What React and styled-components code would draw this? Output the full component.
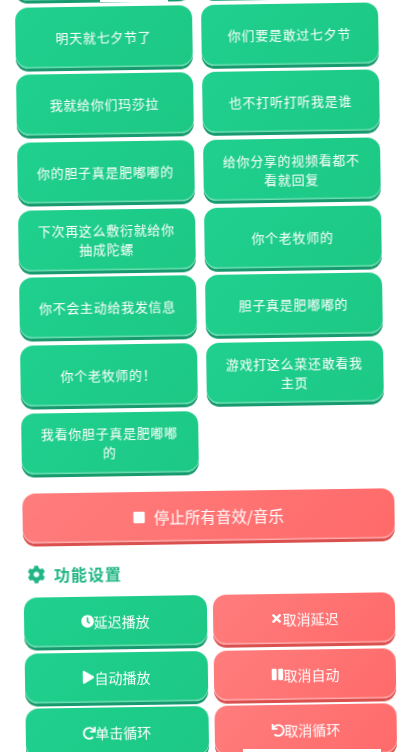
import React from "react";
import styled, { createGlobalStyle } from "styled-components";
import { FaCog, FaClock, FaPlay, FaTimes, FaPause, FaRedo, FaUndo, FaStop } from "react-icons/fa";

const sounds = [
  "", "",
  "明天就七夕节了", "你们要是敢过七夕节",
  "我就给你们玛莎拉", "也不打听打听我是谁",
  "你的胆子真是肥嘟嘟的", "给你分享的视频看都不看就回复",
  "下次再这么敷衍就给你抽成陀螺", "你个老牧师的",
  "你不会主动给我发信息", "胆子真是肥嘟嘟的",
  "你个老牧师的！", "游戏打这么菜还敢看我主页",
  "我看你胆子真是肥嘟嘟的",
];

const settings = [
  { label: "延迟播放", icon: <FaClock />, red: false },
  { label: "取消延迟", icon: <FaTimes />, red: true },
  { label: "自动播放", icon: <FaPlay />, red: false },
  { label: "取消自动", icon: <FaPause />, red: true },
  { label: "单击循环", icon: <FaRedo />, red: false },
  { label: "取消循环", icon: <FaUndo />, red: true },
];

const App = () => {
  return (
    <Viewport>
      <GlobalStyle />
      <Tilted>
        <SoundGrid>
          {sounds.map((s, i) => (
            <SoundButton key={i}>{s}</SoundButton>
          ))}
        </SoundGrid>
        <StopButton>
          <FaStop />
          <span>停止所有音效/音乐</span>
        </StopButton>
        <Heading>
          <FaCog />
          <span>功能设置</span>
        </Heading>
        <SettingGrid>
          {settings.map((s) => (
            <SettingButton key={s.label} $red={s.red}>
              {s.icon}
              <span>{s.label}</span>
            </SettingButton>
          ))}
        </SettingGrid>
      </Tilted>
      <TopPatch />
      <BottomPatch />
    </Viewport>
  );
};

export default App;

const GlobalStyle = createGlobalStyle`
  html, body {
    margin: 0;
    padding: 0;
    background: #fff;
    overflow: hidden;
  }
`;

const Viewport = styled.div`
  position: relative;
  width: 412px;
  height: 752px;
  overflow: hidden;
  background: #fff;
  font-family: "Noto Sans CJK SC", "Noto Sans", sans-serif;
`;

// the whole page is photographed slightly askew
const Tilted = styled.div`
  width: 412px;
  box-sizing: border-box;
  padding: 0 26px 0 13.5px;
  transform: rotate(-0.85deg);
  transform-origin: top left;
  filter: blur(0.35px);
`;

// white scraps left over at the frame edges
const TopPatch = styled.div`
  position: absolute;
  top: 0;
  left: 100px;
  width: 68px;
  height: 2px;
  background: #fff;
`;

const BottomPatch = styled.div`
  position: absolute;
  bottom: 0;
  left: 243px;
  width: 138px;
  height: 3px;
  background: #fff;
`;

const green = `
  background: linear-gradient(135deg, #20d08e, #1cc884);
  box-shadow: 0 3px 0 #169a6e, inset 0 -1.5px 0 rgba(255, 255, 255, 0.35);
`;

const red = `
  background: linear-gradient(135deg, #ff7d7d, #ff6a6a);
  box-shadow: 0 3px 0 #d9504f, inset 0 -1.5px 0 rgba(255, 255, 255, 0.4);
`;

const SoundGrid = styled.div`
  display: grid;
  grid-template-columns: 177px 177px;
  grid-auto-rows: 61px;
  column-gap: 9px;
  row-gap: 6.7px;
  margin-top: -59.7px;
`;

const SoundButton = styled.div`
  ${green}
  display: flex;
  align-items: center;
  justify-content: center;
  text-align: center;
  box-sizing: border-box;
  padding: 0 20px;
  border-radius: 13px;
  color: #fff;
  font-size: 13px;
  letter-spacing: 0.7px;
  line-height: 19px;
`;

const StopButton = styled.div`
  ${red}
  display: flex;
  align-items: center;
  justify-content: center;
  gap: 8px;
  height: 50px;
  margin-top: 19.5px;
  border-radius: 13px;
  color: #fff;
  font-size: 15.5px;
  svg {
    width: 13px;
    height: 13px;
  }
`;

const Heading = styled.div`
  display: flex;
  align-items: center;
  gap: 9px;
  height: 24px;
  margin: 19px 0 10.5px 4px;
  color: #1fb584;
  font-size: 16px;
  font-weight: 700;
  letter-spacing: 1px;
  svg {
    width: 18px;
    height: 18px;
  }
`;

const SettingGrid = styled.div`
  display: grid;
  grid-template-columns: 183px 182px;
  grid-auto-rows: 50px;
  column-gap: 6.5px;
  row-gap: 5.7px;
`;

const SettingButton = styled.div`
  ${(p) => (p.$red ? red : green)}
  display: flex;
  align-items: center;
  justify-content: center;
  border-radius: 13px;
  color: #fff;
  font-size: 14px;
  svg {
    width: 13px;
    height: 13px;
    flex-shrink: 0;
  }
`;
